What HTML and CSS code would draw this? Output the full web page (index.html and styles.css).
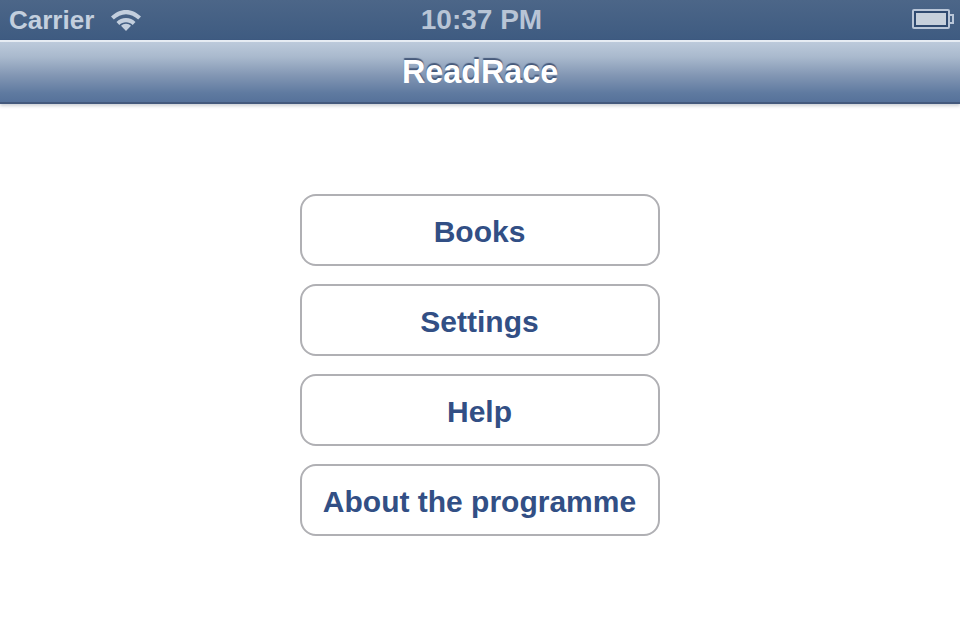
FILE: index.html
```
<!DOCTYPE html>
<html lang="en">
<head>
<meta charset="utf-8">
<title>ReadRace</title>
<link rel="stylesheet" href="styles.css">
</head>
<body>
<div class="status">
  <div class="status-left">
    <span class="carrier">Carrier</span>
    <svg class="wifi" width="32" height="22" viewBox="0 0 32 22"><path d="M1 7.600C5 3.700 10.200 1 16 1s11 2.700 15 6.600l-2.800 3C24.800 7.500 20.600 5.300 16 5.300S7.200 7.500 3.800 10.600z" fill="#c3cfde"/><path d="M6.500 13.100C9 10.500 12.300 9 16 9s7 1.500 9.500 4.100l-2.800 3C20.900 14.300 18.600 13.300 16 13.300s-4.900 1-6.700 2.800z" fill="#c3cfde"/><path d="M16 22l-5-5.200C12.200 15.500 14 14.800 16 14.800s3.800.7 5 2z" fill="#c3cfde"/></svg>
  </div>
  <span class="time">10:37 PM</span>
  <div class="battery"><div class="battery-body"><div class="battery-fill"></div></div><div class="battery-tip"></div></div>
</div>
<header class="navbar"><h1 class="title">ReadRace</h1></header>
<main class="menu">
  <button class="menu-btn">Books</button>
  <button class="menu-btn">Settings</button>
  <button class="menu-btn">Help</button>
  <button class="menu-btn">About the programme</button>
</main>
</body>
</html>
```
FILE: styles.css
```
* { box-sizing: border-box; }
html, body { margin: 0; padding: 0; }
body {
  width: 960px;
  height: 640px;
  overflow: hidden;
  background: #fff;
  font-family: "Liberation Sans", Arial, sans-serif;
}
.status {
  height: 40px;
  display: grid;
  grid-template-columns: 1fr auto 1fr;
  align-items: center;
  padding: 0 6px 0 9px;
  background: linear-gradient(#4c6688, #3e5b81);
}
.status-left { display: flex; align-items: center; gap: 16px; }
.carrier, .time {
  font-weight: 700;
  color: #c3cfde;
  line-height: 40px;
}
.carrier { font-size: 26px; }
.time { font-size: 28px; color: #b8c5d6; }
.wifi { display: block; margin-top: 0; }
.battery { justify-self: end; display: flex; align-items: center; margin-top: -2px; }
.battery-body {
  width: 38px;
  height: 20px;
  border: 2px solid #b9c6d8;
  padding: 2px;
  background: #2f4a70;
  border-radius: 2px;
}
.battery-fill { width: 100%; height: 100%; background: #c6d0dc; }
.battery-tip {
  width: 4px;
  height: 10px;
  border: 2px solid #b9c6d8;
  border-left: 0;
}
.navbar {
  height: 64px;
  display: flex;
  align-items: center;
  justify-content: center;
  border-top: 2px solid #e6ecf3;
  border-bottom: 2px solid #44597c;
  background: linear-gradient(#bccadb 0%, #a9b9cd 25%, #8397b4 55%, #5f7aa0 85%, #56729a 100%);
  box-shadow: 0 2px 3px rgba(60, 70, 90, 0.25);
}
.title {
  margin: 0;
  font-size: 32.3px;
  font-weight: 700;
  color: #fff;
  text-shadow: 0 -2px 1px #46597a;
}
.menu {
  display: flex;
  flex-direction: column;
  align-items: center;
  gap: 18px;
  padding-top: 90px;
}
.menu-btn {
  width: 360px;
  height: 72px;
  padding: 4px 1px 0 0;
  background: #fff;
  border: 2px solid #b0b0b4;
  border-radius: 16px;
  font-family: inherit;
  font-size: 30px;
  font-weight: 700;
  color: #324f85;
}
```
